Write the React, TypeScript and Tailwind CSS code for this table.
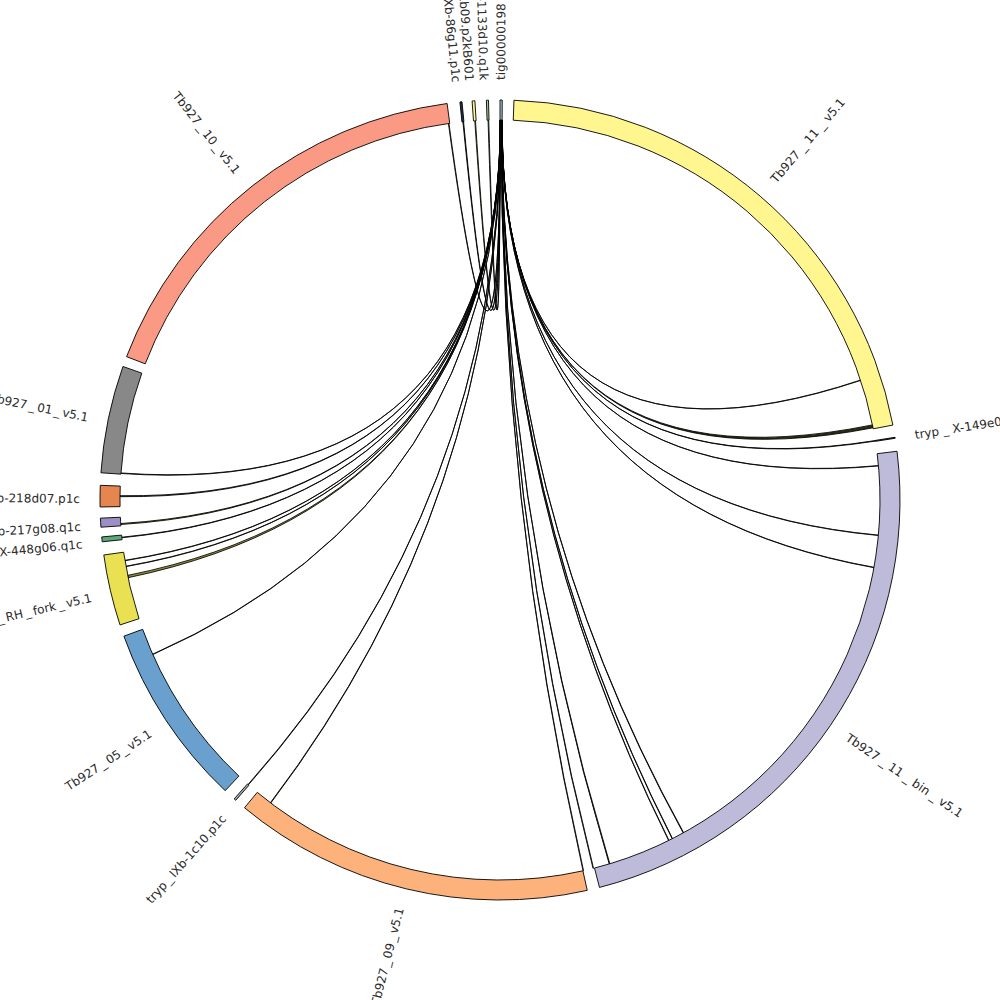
import React from "react";

const CX = 500;
const CY = 500;
const RI = 380;
const RO = 400;
const RL = 420;

const rad = (d: number) => (d * Math.PI) / 180;
const pt = (r: number, d: number): [number, number] => [
  CX + r * Math.sin(rad(d)),
  CY - r * Math.cos(rad(d)),
];
const f = (p: [number, number]) => `${p[0].toFixed(2)} ${p[1].toFixed(2)}`;

type Seg = { name: string; a: number; b: number; color: string; label: number };

const segs: Seg[] = [
  { name: "Tb927 _ 11 _ v5.1", a: 2.0, b: 79.2, color: "#fff68f", label: 40.6 },
  { name: "tryp _ X-149e01.p1c", a: 80.98, b: 81.12, color: "#333333", label: 81.1 },
  { name: "Tb927 _ 11 _ bin _ v5.1", a: 83.0, b: 165.6, color: "#bebada", label: 124.3 },
  { name: "Tb927 _ 09 _ v5.1", a: 167.4, b: 219.7, color: "#fdb27b", label: 194.2 },
  { name: "tryp _ IXb-1c10.p1c", a: 221.35, b: 221.65, color: "#a9a9a9", label: 221.5 },
  { name: "Tb927 _ 05 _ v5.1", a: 223.4, b: 250.1, color: "#69a0cd", label: 236.75 },
  { name: "Tb927 _ RH _ fork _ v5.1", a: 251.8, b: 262.1, color: "#e9e052", label: 256.95 },
  { name: "tryp _ X-448g06.q1c", a: 264.0, b: 264.7, color: "#5ca87b", label: 264.35 },
  { name: "tryp _ Xb-217g08.q1c", a: 266.1, b: 267.4, color: "#9d8ec6", label: 266.75 },
  { name: "tryp _ Xb-218d07.p1c", a: 269.0, b: 272.1, color: "#e5854f", label: 270.55 },
  { name: "Tb927 _ 01 _ v5.1", a: 273.9, b: 289.5, color: "#888888", label: 281.7 },
  { name: "Tb927 _ 10 _ v5.1", a: 291.0, b: 352.4, color: "#fa9a84", label: 321.7 },
  { name: "tryp _ Xb-86g11.p1c", a: 354.25, b: 354.55, color: "#1e2f4a", label: 354.4 },
  { name: "tryp _ IXb09.p2kB601", a: 356.0, b: 356.4, color: "#fff68f", label: 356.2 },
  { name: "tryp _ X-1133d10.q1k", a: 358.05, b: 358.35, color: "#a9cc9c", label: 358.2 },
  { name: "tig00000198", a: 0.0, b: 0.32, color: "#a6cee3", label: 0.15 },
];

type Chord = { a: number; w: number; fill: string };

const chordsRaw: Chord[] = [
  { a: 71.6, w: 0.06, fill: "#fff68f" },
  { a: 78.6, w: 0.45, fill: "#2b2b12" },
  { a: 81.0, w: 0.08, fill: "#222222" },
  { a: 84.8, w: 0.06, fill: "#bebada" },
  { a: 95.3, w: 0.06, fill: "#bebada" },
  { a: 100.2, w: 0.06, fill: "#bebada" },
  { a: 151.1, w: 0.08, fill: "#2a3a4a" },
  { a: 153.0, w: 0.06, fill: "#5a3a2a" },
  { a: 153.6, w: 0.06, fill: "#bebada" },
  { a: 163.2, w: 0.1, fill: "#1e2f4a" },
  { a: 165.75, w: 0.08, fill: "#bebada" },
  { a: 167.3, w: 0.08, fill: "#fdb27b" },
  { a: 217.1, w: 0.08, fill: "#8a7a20" },
  { a: 221.45, w: 0.08, fill: "#555555" },
  { a: 246.0, w: 0.06, fill: "#69a0cd" },
  { a: 258.2, w: 0.35, fill: "#8f8a3a" },
  { a: 259.9, w: 0.06, fill: "#e9e052" },
  { a: 260.8, w: 0.06, fill: "#e9e052" },
  { a: 264.3, w: 0.08, fill: "#5ca87b" },
  { a: 266.3, w: 0.15, fill: "#8a8a40" },
  { a: 270.5, w: 0.15, fill: "#3a5a3a" },
  { a: 274.0, w: 0.08, fill: "#888888" },
  { a: 352.2, w: 0.08, fill: "#fa9a84" },
  { a: 354.4, w: 0.1, fill: "#1e2f4a" },
  { a: 356.2, w: 0.1, fill: "#e9e052" },
  { a: 358.2, w: 0.1, fill: "#a9cc9c" },
];

const n = chordsRaw.length;
const chords = chordsRaw.map((c, i) => {
  const t = 0.32 - (i * 0.34) / n;
  return { ...c, t1: t, t2: t + 0.022 };
});

function segPath(a: number, b: number) {
  const large = b - a > 180 ? 1 : 0;
  return `M ${f(pt(RO, a))} A ${RO} ${RO} 0 ${large} 1 ${f(pt(RO, b))} L ${f(pt(RI, b))} A ${RI} ${RI} 0 ${large} 0 ${f(pt(RI, a))} Z`;
}

function ribbon(t1: number, t2: number, a1: number, a2: number) {
  const c = `${CX} ${CY}`;
  return `M ${f(pt(RI, t1))} Q ${c} ${f(pt(RI, a1))} A ${RI} ${RI} 0 0 1 ${f(pt(RI, a2))} Q ${c} ${f(pt(RI, t2))} A ${RI} ${RI} 0 0 0 ${f(pt(RI, t1))} Z`;
}

function Label({ s }: { s: Seg }) {
  const th = ((s.label % 360) + 360) % 360;
  const left = th >= 180;
  const p = pt(RL, th);
  const rot = left ? th - 270 : th - 90;
  return (
    <text
      transform={`translate(${p[0].toFixed(2)} ${p[1].toFixed(2)}) rotate(${rot.toFixed(2)})`}
      x={0}
      y={left ? 3 : 0}
      textAnchor={left ? "end" : "start"}
      dominantBaseline="central"
      fontFamily="'DejaVu Sans', sans-serif"
      fontSize={12}
      wordSpacing={left ? -1.6 : 0}
      fill="#2a2a2a"
    >
      {s.name}
    </text>
  );
}

export default function App() {
  return (
    <div className="w-[1000px] h-[1000px] bg-white overflow-hidden">
      <svg width={1000} height={1000} viewBox="0 0 1000 1000" className="block">
        <rect x={0} y={0} width={1000} height={1000} fill="#ffffff" />
        <g>
          {chords.map((c, i) => (
            <path
              key={i}
              d={ribbon(c.t1, c.t2, c.a, c.a + c.w)}
              fill={c.fill}
              stroke="#000000"
              strokeWidth={0.85}
              strokeLinejoin="round"
            />
          ))}
        </g>
        <g>
          {segs.map((s, i) => (
            <path key={i} d={segPath(s.a, s.b)} fill={s.color} stroke="#000000" strokeWidth={0.9} />
          ))}
        </g>
        <g>
          {segs.map((s, i) => (
            <Label key={i} s={s} />
          ))}
        </g>
      </svg>
    </div>
  );
}
